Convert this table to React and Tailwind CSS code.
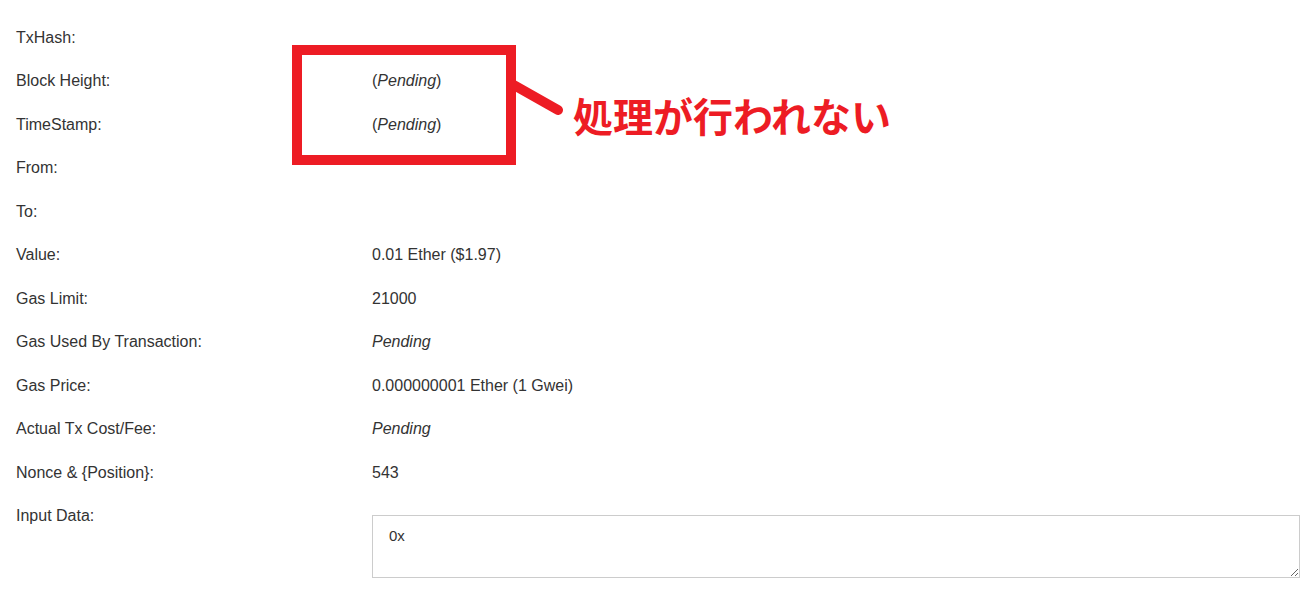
const ROWS = [
  { label: 'TxHash:', value: '' },
  { label: 'Block Height:', value: <>(<i>Pending</i>)</> },
  { label: 'TimeStamp:', value: <>(<i>Pending</i>)</> },
  { label: 'From:', value: '' },
  { label: 'To:', value: '' },
  { label: 'Value:', value: '0.01 Ether ($1.97)' },
  { label: 'Gas Limit:', value: '21000' },
  { label: 'Gas Used By Transaction:', value: <i>Pending</i> },
  { label: 'Gas Price:', value: '0.000000001 Ether (1 Gwei)' },
  { label: 'Actual Tx Cost/Fee:', value: <i>Pending</i> },
  { label: 'Nonce & {Position}:', value: '543' },
]

export default function App() {
  return (
    <div className="relative w-[1316px] h-[600px] overflow-hidden bg-white text-[16px] text-[#333] font-['Liberation_Sans',Arial,sans-serif]">
      <div className="px-4 pt-[16px]">
        {ROWS.map(r => (
          <div key={r.label} className="flex h-[43.5px] items-center leading-[20px]">
            <div className="w-[356px] shrink-0">{r.label}</div>
            <div>{r.value}</div>
          </div>
        ))}
        <div className="flex">
          <div className="w-[356px] shrink-0 leading-[20px] mt-[11.5px]">Input Data:</div>
          <textarea
            readOnly
            defaultValue="0x"
            className="mt-[20.5px] flex-1 h-[63px] border border-[#ccc] px-4 pt-[10px] text-[15px] leading-[20px] text-[#333] font-['Liberation_Sans',Arial,sans-serif] outline-none"
          />
        </div>
      </div>

      {/* annotation */}
      <div className="absolute left-[292px] top-[45px] w-[224px] h-[120px] border-[10px] border-[#ed1c24]" />
      <svg className="absolute left-0 top-0" width="1316" height="600">
        <line x1="512" y1="84" x2="558" y2="110" stroke="#ed1c24" strokeWidth="10" strokeLinecap="round" />
      </svg>
      <div className="absolute left-[573px] top-[95px] text-[40px] leading-none font-bold text-[#ed1c24] font-['Noto_Sans_CJK_JP',sans-serif] whitespace-nowrap">
        処理が行われない
      </div>
    </div>
  )
}
